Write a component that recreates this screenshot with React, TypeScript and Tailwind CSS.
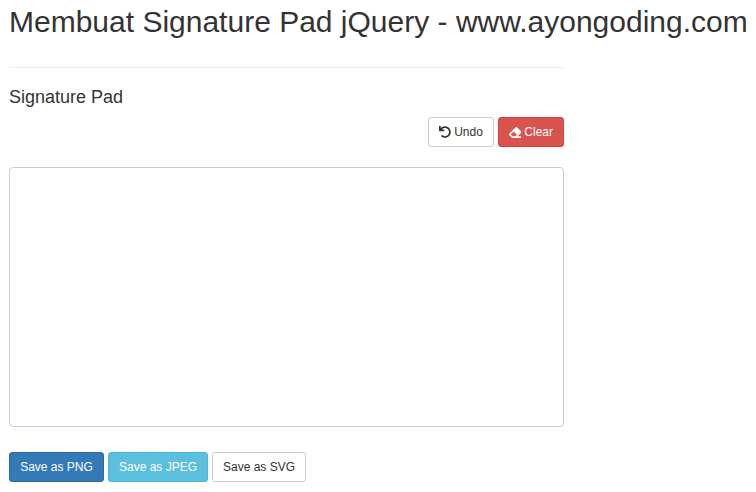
import { FaEraser, FaUndo } from 'react-icons/fa';

const btn = 'h-[30px] rounded-[3px] border px-[10px] text-[12px] leading-[18px] flex items-center justify-center whitespace-nowrap';

export default function App() {
  return (
    <div className="w-[756px] h-[492px] overflow-hidden bg-white pl-[9px] font-['Liberation_Sans',Arial,sans-serif] text-[#333]">
      <h1 className="pt-[5px] text-[30px] leading-[33px] whitespace-nowrap">Membuat Signature Pad jQuery - www.ayongoding.com</h1>
      <div className="w-[555px]">
        <hr className="mt-[29px] border-t border-[#eee]" />
        <h4 className="mt-[19px] text-[18px] leading-[20px]">Signature Pad</h4>
        <div className="mt-[10px] flex justify-end gap-[4px]">
          <button className={`${btn} w-[66px] gap-[3px] border-[#ccc] bg-white text-[#333]`}>
            <FaUndo className="text-[12px]" />
            Undo
          </button>
          <button className={`${btn} w-[66px] gap-[3px] border-[#d43f3a] bg-[#d9534f] text-white`}>
            <FaEraser className="text-[13px]" />
            Clear
          </button>
        </div>
        <div className="mt-[20px] h-[260px] rounded-[4px] border border-[#ccc] bg-white" />
        <div className="mt-[25px] flex gap-[4px]">
          <button className={`${btn} w-[95px] border-[#2e6da4] bg-[#337ab7] text-white`}>Save as PNG</button>
          <button className={`${btn} w-[100px] border-[#46b8da] bg-[#5bc0de] text-white`}>Save as JPEG</button>
          <button className={`${btn} w-[94px] border-[#ccc] bg-white text-[#333]`}>Save as SVG</button>
        </div>
      </div>
    </div>
  );
}
